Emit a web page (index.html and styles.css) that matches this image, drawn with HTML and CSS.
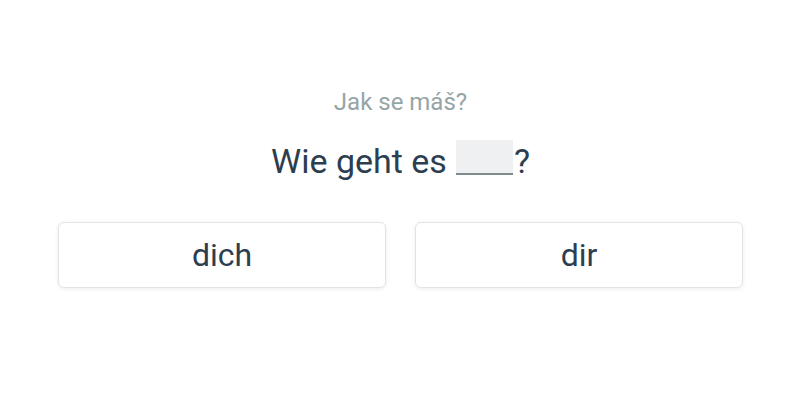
FILE: index.html
```html
<!DOCTYPE html>
<html>
<head>
<meta charset="utf-8">
<link rel="stylesheet" href="styles.css">
</head>
<body>
<main class="quiz">
  <p class="hint">Jak se máš?</p>
  <p class="sentence">Wie geht es <span class="blank"></span>?</p>
  <div class="options">
    <button class="option">dich</button>
    <button class="option">dir</button>
  </div>
</main>
</body>
</html>
```
FILE: styles.css
```css
html, body {
  margin: 0;
  padding: 0;
  background: #ffffff;
}
body {
  font-family: Roboto, "Noto Sans", sans-serif;
  width: 800px;
  height: 400px;
}
.quiz {
  padding: 87px 57px 0 58px;
  display: flex;
  flex-direction: column;
  align-items: center;
}
.hint {
  margin: 0;
  font-size: 24px;
  line-height: 30px;
  color: #95a5a6;
}
.sentence {
  margin: 22px 0 0 0;
  font-size: 34px;
  line-height: 44px;
  color: #2c3e50;
  display: flex;
  align-items: flex-start;
}
.blank {
  display: inline-block;
  width: 57px;
  height: 33px;
  margin-top: 1px;
  margin-left: 9px;
  margin-right: 1px;
  background: #eef0f2;
  border-bottom: 2px solid #7f8c8d;
}
.options {
  margin-top: 39px;
  width: 100%;
  display: grid;
  grid-template-columns: 1fr 1fr;
  gap: 29px;
}
.option {
  height: 66px;
  background: #ffffff;
  border: 1px solid #e1e4e6;
  border-radius: 6px;
  box-shadow: 0 1px 4px rgba(0,0,0,0.08);
  font-family: Roboto, "Noto Sans", sans-serif;
  font-size: 32px;
  color: #2c3e50;
  padding: 0;
}
```
